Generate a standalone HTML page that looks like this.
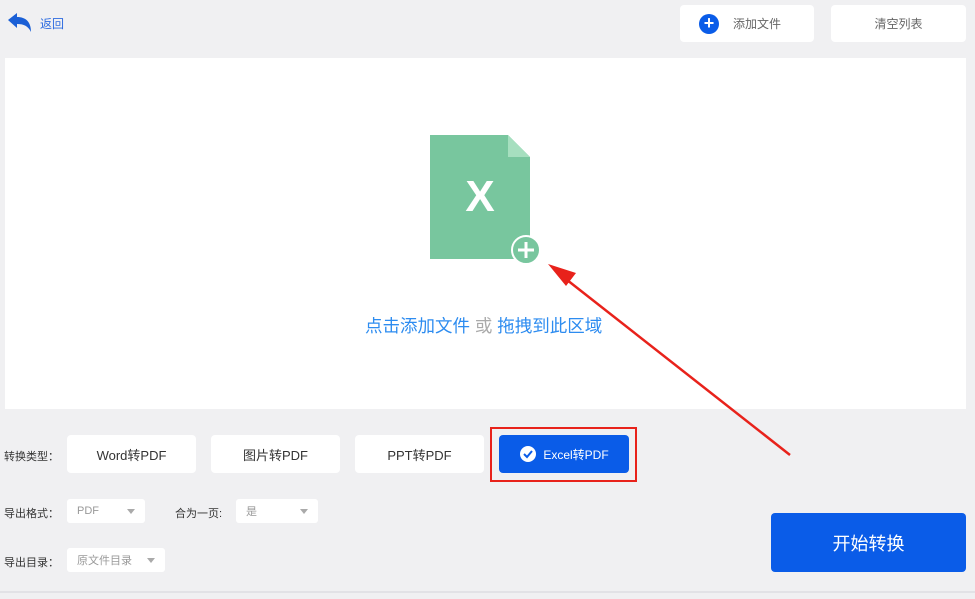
<!DOCTYPE html>
<html><head><meta charset="utf-8"><style>
body{margin:0;width:975px;height:599px;background:#f0f0f2;position:relative;overflow:hidden;font-family:"Liberation Sans","Noto Sans CJK SC",sans-serif;}
.a{position:absolute;box-sizing:border-box}
.w{background:#fff;border-radius:4px}
.btn{display:flex;align-items:center;justify-content:center;font-size:13px;color:#333}
.lab{font-size:11px;color:#333}
.sel{background:#fff;border-radius:3px;font-size:11px;color:#999;padding-left:10px;display:flex;align-items:center}
.tri{position:absolute;right:10px;top:10px;border:4px solid transparent;border-top:5px solid #aaa;}
</style></head><body>
<svg class="a" style="left:6px;top:12px" width="28" height="22" viewBox="0 0 28 22"><path d="M2 8 L11 1 L11 5 C20 5 25 10 25 20 C22 14 18 12 11 12 L11 16 Z" fill="#1a5fd6"/></svg>
<div class="a" style="left:40px;top:15px;font-size:12px;color:#2d6be0">返回</div>
<div class="a w btn" style="left:680px;top:5px;width:134px;height:37px;font-size:12px;color:#666"><span style="display:inline-block;width:20px;height:20px;border-radius:50%;background:#0a5ce8;color:#fff;font-size:18px;line-height:19px;text-align:center;font-weight:bold;margin-right:14px;margin-left:-14px">+</span>添加文件</div>
<div class="a w btn" style="left:831px;top:5px;width:135px;height:37px;font-size:12px;color:#666">清空列表</div>
<div class="a" style="left:5px;top:58px;width:961px;height:351px;background:#fff"></div>
<svg class="a" style="left:420px;top:125px" width="160" height="150">
<path d="M10 10 H88 L110 32 V134 H10 Z" fill="#78c69e"/>
<path d="M88 10 L110 32 H88 Z" fill="#a6dfbf"/>
<text x="60" y="86" font-size="44" font-weight="bold" fill="#fff" text-anchor="middle" font-family="Liberation Sans">X</text>
<circle cx="106" cy="125" r="14" fill="#78c69e" stroke="#fff" stroke-width="2"/>
<path d="M106 117 V133 M98 125 H114" stroke="#fff" stroke-width="3"/>
</svg>
<div class="a" style="left:365px;top:313px;font-size:17.5px;color:#2d8cf0">点击添加文件 <span style="color:#aaa">或</span> 拖拽到此区域</div>
<svg class="a" style="left:0;top:0" width="975" height="599"><path d="M790 455 L562 276" stroke="#e8221b" stroke-width="2.5"/><path d="M548 264 L576 273 L566 286 Z" fill="#e8221b"/></svg>
<div class="a lab" style="left:4px;top:448px">转换类型：</div>
<div class="a w btn" style="left:67px;top:435px;width:129px;height:38px">Word转PDF</div>
<div class="a w btn" style="left:211px;top:435px;width:129px;height:38px">图片转PDF</div>
<div class="a w btn" style="left:355px;top:435px;width:129px;height:38px">PPT转PDF</div>
<div class="a" style="left:490px;top:427px;width:147px;height:55px;border:2px solid #e8221b"></div>
<div class="a btn" style="left:499px;top:435px;width:130px;height:38px;background:#0a5ce8;border-radius:4px;color:#fff;font-size:12px"><svg width="18" height="18" style="margin-right:6px"><circle cx="9" cy="9" r="8" fill="#fff"/><path d="M5 9 L8 12 L13 6" stroke="#0a5ce8" stroke-width="2" fill="none"/></svg>Excel转PDF</div>
<div class="a lab" style="left:4px;top:505px">导出格式：</div>
<div class="a sel" style="left:67px;top:499px;width:78px;height:24px">PDF<span class="tri"></span></div>
<div class="a lab" style="left:175px;top:505px">合为一页:</div>
<div class="a sel" style="left:236px;top:499px;width:82px;height:24px">是<span class="tri"></span></div>
<div class="a lab" style="left:4px;top:554px">导出目录：</div>
<div class="a sel" style="left:67px;top:548px;width:98px;height:24px">原文件目录<span class="tri"></span></div>
<div class="a btn" style="left:771px;top:513px;width:195px;height:59px;background:#0a5ce8;border-radius:4px;color:#fff;font-size:18px">开始转换</div>
<div class="a" style="left:0;top:591px;width:975px;height:2px;background:#e2e2e6"></div>
</body></html>
